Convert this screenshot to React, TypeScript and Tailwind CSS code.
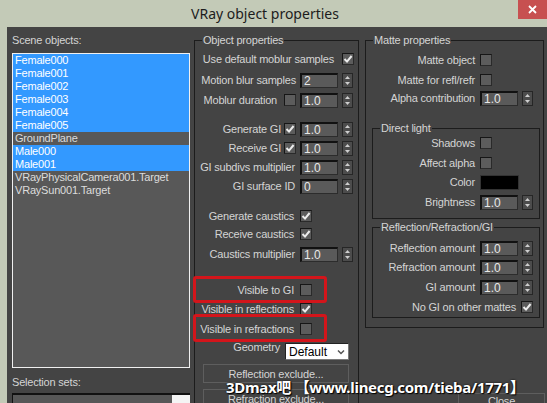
import React from "react";

const objects = [
  { name: "Female000", sel: true },
  { name: "Female001", sel: true },
  { name: "Female002", sel: true },
  { name: "Female003", sel: true },
  { name: "Female004", sel: true },
  { name: "Female005", sel: true },
  { name: "GroundPlane", sel: false },
  { name: "Male000", sel: true },
  { name: "Male001", sel: true },
  { name: "VRayPhysicalCamera001.Target", sel: false },
  { name: "VRaySun001.Target", sel: false },
];

function Check({ on }: { on?: boolean }) {
  return (
    <div className="w-[12px] h-[12px] shrink-0 bg-[#5c5c5c] border border-[#2a2a2a] border-t-[#161616] border-l-[#161616] flex items-center justify-center">
      {on && (
        <svg width="10" height="10" viewBox="0 0 10 10">
          <path d="M1.5 5 L4 7.6 L8.6 2" fill="none" stroke="#ececec" strokeWidth="2" />
        </svg>
      )}
    </div>
  );
}

function Field({ v }: { v: string }) {
  return (
    <div className="w-[38px] h-[15px] shrink-0 bg-[#5a5a5a] border border-[#2c2c2c] border-t-2 border-l-2 border-t-[#111] border-l-[#111] pl-[2px] text-[12px] leading-[12px] text-[#e8e8e8] tracking-normal">
      {v}
    </div>
  );
}

function Spin() {
  return (
    <div className="w-[11px] h-[15px] shrink-0 bg-[#4c4c4c] border border-[#262626] flex flex-col items-center justify-center gap-[3px]">
      <svg width="5" height="3" viewBox="0 0 5 3">
        <path d="M0 3 L2.5 0 L5 3 Z" fill="#cfcfcf" />
      </svg>
      <svg width="5" height="3" viewBox="0 0 5 3">
        <path d="M0 0 L2.5 3 L5 0 Z" fill="#cfcfcf" />
      </svg>
    </div>
  );
}

function Row({ text, cls, lm = "mr-[5px]", children }: { text: string; cls: string; lm?: string; children: React.ReactNode }) {
  return (
    <div className={"relative flex items-center justify-end " + cls}>
      <span className={"whitespace-nowrap " + lm}>{text}</span>
      <div className="flex items-center gap-[4px]">{children}</div>
    </div>
  );
}

export default function App() {
  return (
    <div className="relative w-[547px] h-[403px] overflow-hidden bg-[#c3cab7] font-['Liberation_Sans',Arial,sans-serif] text-[11px] leading-[14px] tracking-[-0.2px] text-[#d4d4d4]">
      {/* title bar */}
      <div className="h-[27px] flex items-center justify-center pr-[17px]">
        <span className="font-['Noto_Sans',sans-serif] text-[14px] tracking-normal text-[#1c1c1c]">VRay object properties</span>
      </div>
      <div className="absolute right-0 top-0 w-[29px] h-[19px] bg-[#c75050] flex items-center justify-center">
        <svg width="9" height="9" viewBox="0 0 9 9">
          <path d="M1 1 L8 8 M8 1 L1 8" stroke="#fff" strokeWidth="1.8" />
        </svg>
      </div>

      <div className="ml-[7px] h-[376px] bg-[#444444] flex overflow-hidden">
        {/* scene objects */}
        <div className="w-[187px] shrink-0 pl-[5px] pt-[6px]">
          <div>Scene objects:</div>
          <div className="mt-[6px] w-[178px] h-[315px] border border-[#f0f0f0] bg-[#585858]">
            {objects.map((o) => (
              <div
                key={o.name}
                className={o.sel ? "h-[13px] leading-[13px] pl-[2px] bg-[#3399ff] text-white" : "h-[13px] leading-[13px] pl-[2px] text-[#dcdcdc]"}
              >
                {o.name}
              </div>
            ))}
          </div>
          <div className="mt-[7px]">Selection sets:</div>
          <div className="mt-[4px] w-[178px] h-[20px] border-t-2 border-l border-[#111] bg-[#575757] flex justify-end">
            <div className="w-[18px] h-full bg-[#f4f4f4]"></div>
          </div>
        </div>

        {/* object properties */}
        <fieldset className="w-[165px] h-[380px] shrink-0 mt-[6px] border border-[#1c1c1c]">
          <legend className="ml-[7px] px-[1px] leading-[14px]">Object properties</legend>
          <Row text="Use default moblur samples" cls="h-[18px] mt-[3px] pr-[4px]" lm="mr-[8px]">
            <Check on />
          </Row>
          <Row text="Motion blur samples" cls="h-[18px] mt-[3px] pr-[5px]" lm="mr-[4px]">
            <Field v="2" />
            <Spin />
          </Row>
          <Row text="Moblur duration" cls="h-[18px] mt-[2px] pr-[5px]" lm="mr-[7px]">
            <Check />
            <Field v="1.0" />
            <Spin />
          </Row>
          <Row text="Generate GI" cls="h-[18px] mt-[11px] pr-[5px]" lm="mr-[3px]">
            <Check on />
            <Field v="1.0" />
            <Spin />
          </Row>
          <Row text="Receive GI" cls="h-[18px] mt-[1px] pr-[5px]" lm="mr-[3px]">
            <Check on />
            <Field v="1.0" />
            <Spin />
          </Row>
          <Row text="GI subdivs multiplier" cls="h-[18px] mt-[1px] pr-[5px]">
            <Field v="1.0" />
            <Spin />
          </Row>
          <Row text="GI surface ID" cls="h-[18px] mt-[1px] pr-[5px]">
            <Field v="0" />
            <Spin />
          </Row>
          <Row text="Generate caustics" cls="h-[18px] mt-[12px] pr-[46px]" lm="mr-[6px]">
            <Check on />
          </Row>
          <Row text="Receive caustics" cls="h-[18px] mt-[0px] pr-[46px]" lm="mr-[6px]">
            <Check on />
          </Row>
          <Row text="Caustics multiplier" cls="h-[18px] mt-[2px] pr-[5px]">
            <Field v="1.0" />
            <Spin />
          </Row>
          <Row text="Visible to GI" cls="h-[18px] mt-[18px] pr-[46px]" lm="mr-[6px]">
            <Check />
            <div className="absolute -left-[2px] -top-[5px] w-[134px] h-[27px] border-[3px] border-[#d3151b] rounded-[3px]"></div>
          </Row>
          <Row text="Visible in reflections" cls="h-[18px] mt-[1px] pr-[46px]" lm="mr-[6px]">
            <Check on />
          </Row>
          <Row text="Visible in refractions" cls="h-[18px] mt-[2px] pr-[46px]" lm="mr-[6px]">
            <Check />
            <div className="absolute -left-[2px] -top-[6px] w-[134px] h-[28px] border-[3px] border-[#d3151b] rounded-[3px]"></div>
          </Row>
          <div className="h-[18px] flex items-start justify-end pr-[9px]">
            <span className="leading-[18px] mr-[5px]">Geometry</span>
            <div className="mt-[5px] w-[64px] h-[17px] shrink-0 bg-white border border-[#7a7a7a] border-t-[#222] border-l-[#222] flex items-center justify-between pl-[3px] pr-[3px] text-[12px] text-black tracking-normal">
              <span>Default</span>
              <svg width="8" height="6" viewBox="0 0 8 6">
                <path d="M1 1.5 L4 4.5 L7 1.5" fill="none" stroke="#555" strokeWidth="1.5" />
              </svg>
            </div>
          </div>
          <div className="mt-[8px] ml-[8px] w-[146px] h-[19px] border border-[#5e5e5e] flex items-center justify-center">Reflection exclude...</div>
          <div className="mt-[6px] ml-[8px] w-[146px] h-[19px] border border-[#5e5e5e] flex items-center justify-center">Refraction exclude...</div>
        </fieldset>

        {/* matte properties */}
        <div className="ml-[6px] w-[179px] shrink-0 flex flex-col">
          <fieldset className="mt-[6px] border border-[#1c1c1c] pb-[9px]">
            <legend className="ml-[7px] px-[1px] leading-[14px]">Matte properties</legend>
            <Row text="Matte object" cls="h-[18px] mt-[4px] pr-[51px]">
              <Check />
            </Row>
            <Row text="Matte for refl/refr" cls="h-[18px] mt-[2px] pr-[51px]">
              <Check />
            </Row>
            <Row text="Alpha contribution" cls="h-[18px] mt-[0px] pr-[10px]">
              <Field v="1.0" />
              <Spin />
            </Row>

            <fieldset className="mt-[15px] ml-[6px] w-[168px] border border-[#1c1c1c] pb-[8px]">
              <legend className="ml-[7px] px-[1px] leading-[12px]">Direct light</legend>
              <Row text="Shadows" cls="h-[16px] mt-[1px] pr-[47px]">
                <Check />
              </Row>
              <Row text="Affect alpha" cls="h-[16px] mt-[4px] pr-[47px]">
                <Check />
              </Row>
              <Row text="Color" cls="h-[16px] mt-[3px] pr-[20px]">
                <div className="w-[39px] h-[15px] bg-black border border-[#333]"></div>
              </Row>
              <Row text="Brightness" cls="h-[16px] mt-[4px] pr-[6px]">
                <Field v="1.0" />
                <Spin />
              </Row>
            </fieldset>

            <fieldset className="mt-[2px] ml-[6px] w-[168px] border border-[#1c1c1c] pb-[2px]">
              <legend className="ml-[7px] px-[1px] leading-[12px]">Reflection/Refraction/GI</legend>
              <Row text="Reflection amount" cls="h-[16px] mt-[7px] pr-[6px]">
                <Field v="1.0" />
                <Spin />
              </Row>
              <Row text="Refraction amount" cls="h-[16px] mt-[3px] pr-[6px]">
                <Field v="1.0" />
                <Spin />
              </Row>
              <Row text="GI amount" cls="h-[16px] mt-[4px] pr-[6px]">
                <Field v="1.0" />
                <Spin />
              </Row>
              <Row text="No GI on other mattes" cls="h-[16px] mt-[4px] pr-[6px]">
                <Check on />
              </Row>
            </fieldset>
          </fieldset>
          <div className="mt-[65px] ml-[93px] w-[87px] h-[22px] border border-[#5e5e5e] flex items-center justify-center">Close</div>
        </div>
      </div>

      {/* watermark */}
      <div className="absolute left-[226px] top-[377px] whitespace-nowrap font-['Noto_Sans','Noto_Sans_CJK_SC',sans-serif] font-bold text-[15px] leading-[20px] tracking-[-0.3px] text-white [text-shadow:0_0_2px_#000,1px_1px_1px_#000]">
        3Dmax吧 【www.linecg.com/tieba/1771】
      </div>
    </div>
  );
}
